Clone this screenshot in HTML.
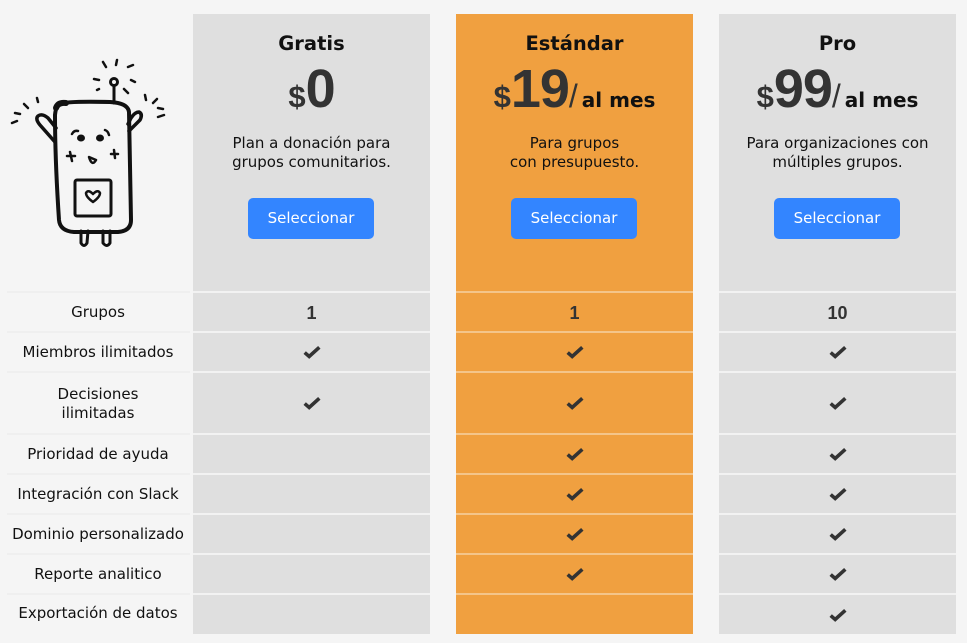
<!DOCTYPE html>
<html><head><meta charset="utf-8"><style>
*{margin:0;padding:0;box-sizing:border-box}
body{width:967px;height:643px;background:#f5f5f5;font-family:"DejaVu Sans","Liberation Sans",sans-serif;color:#111;position:relative;overflow:hidden}
.col{position:absolute;top:14px;width:237px;height:620px;background:#dfdfdf}
.col.o{background:#f0a040}
.sep{position:absolute;left:0;width:100%;height:2px;background:#f2f2f2}
.col.o .sep{background:#f4c58a}
.t{position:absolute;left:0;width:100%;text-align:center;font-weight:bold;font-size:19.5px;top:18px}
.p{position:absolute;left:0;width:100%;text-align:center;top:44px;white-space:nowrap;color:#333;font-family:"Liberation Sans",sans-serif;font-weight:bold}
.p .d{font-size:31px}
.p .n{font-size:54px;letter-spacing:-1px}
.p .s{font-size:32px;font-weight:normal}
.p .m{font-family:"DejaVu Sans",sans-serif;font-size:20px;color:#111;margin-left:4px}
.desc{position:absolute;left:0;width:100%;text-align:center;top:120px;font-size:15px;line-height:19px}
.btn{position:absolute;left:55px;top:184px;width:126px;height:41px;border-radius:5px;background:#3385ff;color:#fff;font-size:15px;text-align:center;line-height:41px}
.cell{position:absolute;left:0;width:100%;display:flex;align-items:center;justify-content:center;color:#333;font-family:"Liberation Sans",sans-serif;font-weight:bold;font-size:18px}
.lab{position:absolute;left:8px;width:180px;text-align:center;font-size:15px;line-height:19px;display:flex;align-items:center;justify-content:center}
.lsep{position:absolute;left:7px;width:183px;height:2px;background:#efefef}
</style></head><body>

<svg style="position:absolute;left:0;top:50px" width="180" height="200" viewBox="0 50 180 200" fill="none" stroke="#111" stroke-linecap="round" stroke-linejoin="round">
<g stroke-width="2.5">
<line x1="103" y1="62" x2="106" y2="67"/><line x1="117" y1="60" x2="116" y2="65"/><line x1="128" y1="67" x2="133" y2="65"/>
<line x1="94" y1="79" x2="99" y2="80"/><line x1="131" y1="80" x2="135" y2="82"/><line x1="97" y1="90" x2="99" y2="89"/><line x1="124" y1="89" x2="128" y2="93"/>
<line x1="37" y1="98" x2="38" y2="102"/><line x1="24" y1="104" x2="28" y2="108"/><line x1="15" y1="113" x2="20" y2="114"/><line x1="12" y1="123" x2="17" y2="121"/>
<line x1="145" y1="95" x2="146" y2="100"/><line x1="153" y1="103" x2="157" y2="99"/><line x1="158" y1="108" x2="163" y2="109"/><line x1="158" y1="117" x2="164" y2="115"/>
</g>
<g stroke-width="4">
<circle cx="114" cy="82" r="3.5" stroke-width="3"/><line x1="114" y1="86" x2="114" y2="103" stroke-width="3"/>
<path d="M60 104 Q66 101 110 102 Q128 103 129 112 L131 220 Q131 231 118 232 L74 232 Q60 231 59 220 Q55 160 55 115 Q56 105 60 104 Z"/>
<path d="M56 108 Q58 102 66 103" stroke-width="6"/>
<path d="M55 142 L40 125 Q35 119 38 116 Q42 113 48 118 L56 128" stroke-width="3.5"/>
<path d="M129 131 L140 120 Q143 114 139 112 Q135 112 131 118 L128 124" stroke-width="3.5"/>
<path d="M81 231 L81 243 Q84 248 87 243 L88 231" stroke-width="3"/>
<path d="M103 231 L103 243 Q107 248 110 243 L110 231" stroke-width="3"/>
<rect x="75" y="180" width="36" height="36" rx="2" stroke-width="3"/>
</g>
<g stroke-width="2.5">
<path d="M86 193 Q88 189 93 194 Q98 189 100 193 Q100 197 93 202 Q86 197 86 193 Z"/>
<path d="M72 134 Q74 130 78 131"/><path d="M105 130 Q108 131 109 135"/>
<path d="M89 157 Q92 167 96 160 Z"/>
<path d="M70 152 L72 161 M67 156 L75 156"/><path d="M114 150 L115 158 M111 154 L118 154"/>
</g>
<ellipse cx="81" cy="138" rx="3.5" ry="3" fill="#111"/><ellipse cx="100" cy="138" rx="3.5" ry="3" fill="#111"/>
</svg>

<div class="lsep" style="top:291px"></div><div class="lsep" style="top:331px"></div><div class="lsep" style="top:371px"></div><div class="lsep" style="top:433px"></div><div class="lsep" style="top:473px"></div><div class="lsep" style="top:513px"></div><div class="lsep" style="top:553px"></div><div class="lsep" style="top:593px"></div>
<div class="lab" style="top:293px;height:38px">Grupos</div>
<div class="lab" style="top:333px;height:38px">Miembros ilimitados</div>
<div class="lab" style="top:373px;height:61px">Decisiones<br>ilimitadas</div>
<div class="lab" style="top:435px;height:38px">Prioridad de ayuda</div>
<div class="lab" style="top:475px;height:38px">Integración con Slack</div>
<div class="lab" style="top:515px;height:38px">Dominio personalizado</div>
<div class="lab" style="top:555px;height:38px">Reporte analitico</div>
<div class="lab" style="top:595px;height:37px">Exportación de datos</div>

<svg width="0" height="0" style="position:absolute"><defs><symbol id="ck" viewBox="0 0 16 12"><path d="M1.5 6.5 L5.5 10 L14.5 1.8" fill="none" stroke="#333" stroke-width="3.2"/></symbol></defs></svg>

<!-- Gratis -->
<div class="col" style="left:193px">
<div class="t">Gratis</div>
<div class="p"><span class="d">$</span><span class="n">0</span></div>
<div class="desc">Plan a donación para<br>grupos comunitarios.</div>
<div class="btn">Seleccionar</div>
<div class="sep" style="top:277px"></div><div class="sep" style="top:317px"></div><div class="sep" style="top:357px"></div><div class="sep" style="top:419px"></div><div class="sep" style="top:459px"></div><div class="sep" style="top:499px"></div><div class="sep" style="top:539px"></div><div class="sep" style="top:579px"></div>
<div class="cell" style="top:280px;height:38px">1</div>
<div class="cell" style="top:319px;height:38px"><svg width="18" height="14"><use href="#ck"/></svg></div>
<div class="cell" style="top:359px;height:60px;align-items:flex-start;padding-top:23px"><svg width="18" height="14"><use href="#ck"/></svg></div>
</div>

<!-- Estandar -->
<div class="col o" style="left:456px">
<div class="t">Estándar</div>
<div class="p"><span class="d">$</span><span class="n">19</span><span class="s">/</span><span class="m">al mes</span></div>
<div class="desc">Para grupos<br>con presupuesto.</div>
<div class="btn">Seleccionar</div>
<div class="sep" style="top:277px"></div><div class="sep" style="top:317px"></div><div class="sep" style="top:357px"></div><div class="sep" style="top:419px"></div><div class="sep" style="top:459px"></div><div class="sep" style="top:499px"></div><div class="sep" style="top:539px"></div><div class="sep" style="top:579px"></div>
<div class="cell" style="top:280px;height:38px">1</div>
<div class="cell" style="top:319px;height:38px"><svg width="18" height="14"><use href="#ck"/></svg></div>
<div class="cell" style="top:359px;height:60px"><svg width="18" height="14"><use href="#ck"/></svg></div>
<div class="cell" style="top:421px;height:38px"><svg width="18" height="14"><use href="#ck"/></svg></div>
<div class="cell" style="top:461px;height:38px"><svg width="18" height="14"><use href="#ck"/></svg></div>
<div class="cell" style="top:501px;height:38px"><svg width="18" height="14"><use href="#ck"/></svg></div>
<div class="cell" style="top:541px;height:38px"><svg width="18" height="14"><use href="#ck"/></svg></div>
</div>

<!-- Pro -->
<div class="col" style="left:719px">
<div class="t">Pro</div>
<div class="p"><span class="d">$</span><span class="n">99</span><span class="s">/</span><span class="m">al mes</span></div>
<div class="desc">Para organizaciones con<br>múltiples grupos.</div>
<div class="btn">Seleccionar</div>
<div class="sep" style="top:277px"></div><div class="sep" style="top:317px"></div><div class="sep" style="top:357px"></div><div class="sep" style="top:419px"></div><div class="sep" style="top:459px"></div><div class="sep" style="top:499px"></div><div class="sep" style="top:539px"></div><div class="sep" style="top:579px"></div>
<div class="cell" style="top:280px;height:38px">10</div>
<div class="cell" style="top:319px;height:38px"><svg width="18" height="14"><use href="#ck"/></svg></div>
<div class="cell" style="top:359px;height:60px"><svg width="18" height="14"><use href="#ck"/></svg></div>
<div class="cell" style="top:421px;height:38px"><svg width="18" height="14"><use href="#ck"/></svg></div>
<div class="cell" style="top:461px;height:38px"><svg width="18" height="14"><use href="#ck"/></svg></div>
<div class="cell" style="top:501px;height:38px"><svg width="18" height="14"><use href="#ck"/></svg></div>
<div class="cell" style="top:541px;height:38px"><svg width="18" height="14"><use href="#ck"/></svg></div>
<div class="cell" style="top:581px;height:39px"><svg width="18" height="14"><use href="#ck"/></svg></div>
</div>

</body></html>
